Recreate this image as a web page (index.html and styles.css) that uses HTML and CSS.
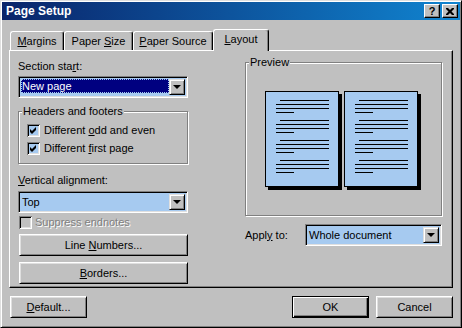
FILE: index.html
```html
<!DOCTYPE html>
<html lang="en">
<head>
  <meta charset="UTF-8">
  <title>Page Setup</title>
  <link rel="stylesheet" href="styles.css">
</head>
<body>

  <div class="window">
    <div class="titlebar">
      <span class="title">Page Setup</span>
      <div class="title-buttons">
        <span class="tb-btn">?</span>
        <span class="tb-btn">
          <svg width="8" height="7" viewBox="0 0 8 7"><path d="M0 0h2l2 2 2-2h2v1l-2.5 2.5 2.5 2.5v1h-2l-2-2-2 2h-2v-1l2.5-2.5-2.5-2.5z"/></svg>
        </span>
      </div>
    </div>

    <div class="tabs">
      <div class="tab tab-margins"><span><u>M</u>argins</span></div>
      <div class="tab tab-size"><span>Paper <u>S</u>ize</span></div>
      <div class="tab tab-source"><span><u>P</u>aper Source</span></div>
      <div class="tab tab-layout active"><span><u>L</u>ayout</span></div>
    </div>

    <div class="panel">
      <div class="col-left">
        <div class="label">Section sta<u>r</u>t:</div>
        <div class="combo">
          <span class="combo-value selected">New page</span>
          <span class="combo-arrow"><i></i></span>
        </div>

        <div class="group headers">
          <span class="group-title">Headers and footers</span>
          <div class="check-row first">
            <span class="check on"><svg width="13" height="13" viewBox="0 0 13 13"><path d="M3 5l2 2 4-4v3l-4 4-2-2z"/></svg></span>
            <span>Different <u>o</u>dd and even</span>
          </div>
          <div class="check-row">
            <span class="check on"><svg width="13" height="13" viewBox="0 0 13 13"><path d="M3 5l2 2 4-4v3l-4 4-2-2z"/></svg></span>
            <span>Different <u>f</u>irst page</span>
          </div>
        </div>

        <div class="label valign"><u>V</u>ertical alignment:</div>
        <div class="combo">
          <span class="combo-value">Top</span>
          <span class="combo-arrow"><i></i></span>
        </div>

        <div class="check-row disabled">
          <span class="check"></span>
          <span>Suppress endnotes</span>
        </div>

        <button class="btn wide line-numbers">Line <u>N</u>umbers...</button>
        <button class="btn wide borders"><u>B</u>orders...</button>
      </div>

      <div class="col-right">
        <div class="group preview">
          <span class="group-title">Preview</span>
          <svg class="pages" width="157" height="99" viewBox="0 0 157 99">
            <defs>
              <g id="para">
                <rect x="15" y="9" width="49" height="1"/>
                <rect x="11" y="13" width="53" height="1"/>
                <rect x="11" y="17" width="53" height="1"/>
                <rect x="11" y="21" width="18" height="1"/>
              </g>
              <g id="page">
                <rect x="3" y="3" width="74" height="96" fill="#000"/>
                <rect x="0.5" y="0.5" width="73" height="95" fill="#a6caf0" stroke="#000"/>
                <use href="#para"/>
                <use href="#para" y="20"/>
                <use href="#para" y="40"/>
                <use href="#para" y="60"/>
              </g>
            </defs>
            <use href="#page"/>
            <use href="#page" x="79"/>
          </svg>
        </div>

        <div class="apply-row">
          <span>Appl<u>y</u> to:</span>
          <div class="combo apply">
            <span class="combo-value">Whole document</span>
            <span class="combo-arrow"><i></i></span>
          </div>
        </div>
      </div>
    </div>

    <div class="footer">
      <button class="btn"><u>D</u>efault...</button>
      <div class="footer-right">
        <button class="btn default">OK</button>
        <button class="btn">Cancel</button>
      </div>
    </div>
  </div>

</body>
</html>
```

FILE: styles.css
```css
body {
  margin: 0;
  background: #c0c0c0;
  font-family: "Liberation Sans", Arial, sans-serif;
  font-size: 11px;
  line-height: 13px;
  color: #000;
}
u {
  text-decoration-thickness: 1px;
  text-underline-offset: 1px;
}
.window {
  width: 462px;
  height: 328px;
  box-sizing: border-box;
  border: 1px solid;
  border-color: #dfdfdf #000 #000 #dfdfdf;
  box-shadow: inset 1px 1px #fff, inset -1px -1px #808080;
  padding: 0 1px 1px 1px;
}

/* title bar */
.titlebar {
  height: 18px;
  margin-top: 1px;
  background: linear-gradient(to right, #0a246a, #1084d0);
  display: flex;
  align-items: center;
  justify-content: space-between;
  padding: 0 2px 0 4px;
}
.title {
  color: #fff;
  font-weight: bold;
  font-size: 12px;
}
.title-buttons {
  display: flex;
  gap: 2px;
}
.tb-btn {
  width: 16px;
  height: 14px;
  box-sizing: border-box;
  background: #c0c0c0;
  border: 1px solid;
  border-color: #fff #000 #000 #fff;
  box-shadow: inset -1px -1px #808080;
  display: flex;
  align-items: center;
  justify-content: center;
  font-weight: bold;
  font-size: 11px;
  line-height: 11px;
}

/* tabs */
.tabs {
  display: flex;
  align-items: flex-end;
  height: 21px;
  margin: 9px 0 0 8px;
}
.tab {
  height: 19px;
  box-sizing: border-box;
  border: 1px solid;
  border-color: #fff #000 transparent #fff;
  border-bottom: none;
  border-radius: 3px 3px 0 0;
  box-shadow: inset -1px 0 #808080;
  display: flex;
  align-items: center;
  justify-content: center;
  padding-top: 1px;
}
.tab-margins { width: 54px; }
.tab-size { width: 69px; }
.tab-source { width: 80px; }
.tab-layout { width: 56px; }
.tab.active {
  height: 22px;
  margin-bottom: -1px;
  position: relative;
  z-index: 1;
  background: #c0c0c0;
  padding-top: 0;
  padding-bottom: 2px;
}

/* panel */
.panel {
  width: 444px;
  height: 238px;
  box-sizing: border-box;
  margin-left: 7px;
  border: 1px solid;
  border-color: #fff #000 #000 #fff;
  box-shadow: inset -1px -1px #808080;
  display: flex;
  gap: 57px;
  padding: 9px 0 0 8px;
}
.col-left {
  width: 170px;
  display: flex;
  flex-direction: column;
}
.col-right {
  width: 197px;
  display: flex;
  flex-direction: column;
}
.label {
  margin-bottom: 3px;
}
.label.valign {
  margin-top: 10px;
  margin-bottom: 4px;
}

/* combo box */
.combo {
  display: flex;
  height: 22px;
  box-sizing: border-box;
  border: 1px solid;
  border-color: #808080 #fff #fff #808080;
  box-shadow: inset 1px 1px #000, inset -1px -1px #dfdfdf;
  padding: 2px;
  background: #a6caf0;
}
.combo-value {
  flex: 1;
  padding-left: 1px;
  display: flex;
  align-items: center;
}
.combo-value.selected {
  background: #000080;
  color: #fff;
  margin-bottom: 2px;
  outline: 1px dotted #a6caf0;
  outline-offset: -1px;
}
.combo-arrow {
  width: 16px;
  box-sizing: border-box;
  background: #c0c0c0;
  border: 1px solid;
  border-color: #dfdfdf #000 #000 #dfdfdf;
  box-shadow: inset 1px 1px #fff, inset -1px -1px #808080;
  display: flex;
  align-items: center;
  justify-content: center;
}
.combo-arrow i {
  width: 0;
  height: 0;
  border-left: 4px solid transparent;
  border-right: 4px solid transparent;
  border-top: 4px solid #000;
}

/* group boxes */
.group {
  border: 1px solid #808080;
  box-shadow: inset 1px 1px #fff, 1px 1px #fff;
  box-sizing: border-box;
}
.group-title {
  display: block;
  width: max-content;
  margin: -7px 0 0 3px;
  padding: 0 1px;
  background: #c0c0c0;
}
.headers {
  margin-top: 13px;
  width: 170px;
  padding: 0 8px 8px 8px;
}
.headers .group-title {
  margin-left: -5px;
}
.check-row {
  display: flex;
  align-items: center;
  gap: 4px;
  height: 13px;
  margin-top: 5px;
}
.check-row.first {
  margin-top: 6px;
}
.check {
  width: 13px;
  height: 13px;
  flex: none;
  background: #c0c0c0;
  box-shadow: inset 1px 1px #808080, inset -1px -1px #fff, inset 2px 2px #000, inset -2px -2px #dfdfdf;
}
.check.on {
  background: #a6caf0;
}
.check svg {
  display: block;
}
.check-row.disabled {
  margin: 3px 0 0 1px;
  gap: 3px;
  color: #808080;
  text-shadow: 1px 1px #fff;
}

/* buttons */
.btn {
  height: 22px;
  width: 77px;
  box-sizing: border-box;
  background: #c0c0c0;
  border: 1px solid;
  border-color: #fff #000 #000 #fff;
  box-shadow: inset 1px 1px #dfdfdf, inset -1px -1px #808080;
  font: inherit;
  color: #000;
  padding: 0;
}
.btn.wide {
  width: 169px;
  margin-left: 1px;
}
.line-numbers {
  margin-top: 5px;
}
.borders {
  margin-top: 6px;
}
.btn.default {
  border-color: #000;
  box-shadow: inset 1px 1px #fff, inset -1px -1px #000, inset -2px -2px #808080;
}

/* preview */
.preview {
  margin-top: 2px;
  height: 154px;
  display: flex;
  flex-direction: column;
  align-items: center;
}
.preview .group-title {
  align-self: flex-start;
}
.pages {
  margin-top: 22px;
  display: block;
}
.apply-row {
  margin-top: 8px;
  display: flex;
  align-items: center;
  justify-content: space-between;
}
.combo.apply {
  width: 137px;
}

/* footer */
.footer {
  display: flex;
  justify-content: space-between;
  margin-top: 8px;
  padding: 0 7px 0 8px;
}
.footer-right {
  display: flex;
  gap: 7px;
}
```
